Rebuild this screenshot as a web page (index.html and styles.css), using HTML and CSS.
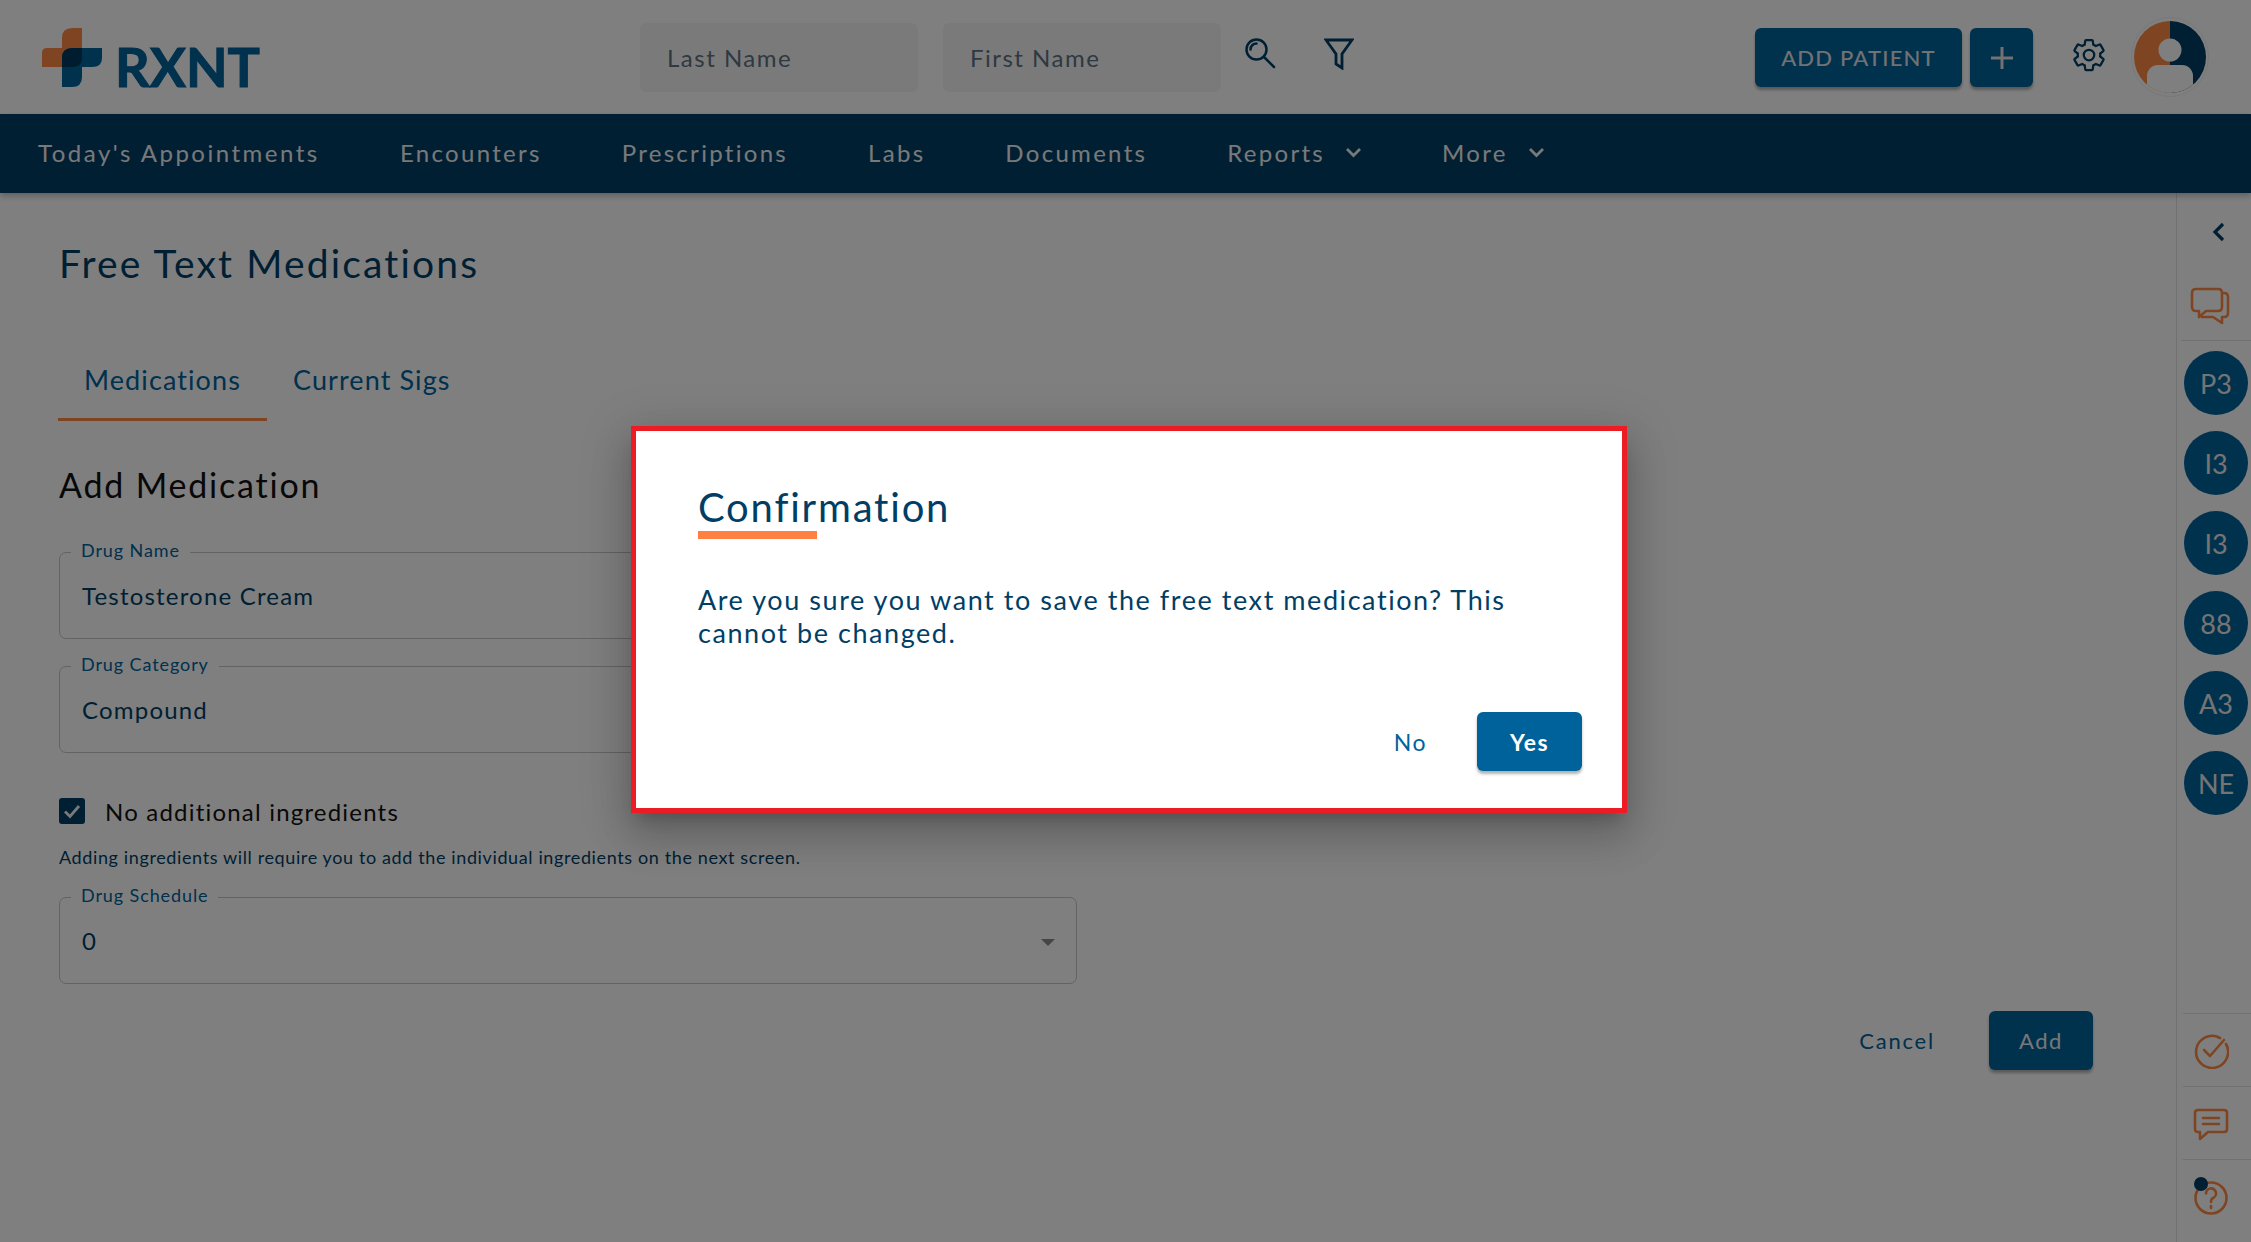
FILE: index.html
```html
<!DOCTYPE html>
<html lang="en">
<head>
<meta charset="utf-8">
<title>Free Text Medications</title>
<link rel="stylesheet" href="styles.css">
</head>
<body>
<div class="app">
  <header class="top">
    <div class="logo">
      <svg class="logo-mark" width="60" height="59" viewBox="0 0 60 59">
        <path class="lg-o" d="M40 0V39H0V25Q0 20 5 20H20V10Q20 0 30 0Z"/>
        <path class="lg-b" d="M20 30Q20 20 30 20H60V30Q60 39 50 39H40V49Q40 59 30 59H20Z"/>
        <path class="lg-d" d="M20 39V30Q20 20 30 20H40V30Q40 39 30 39Z"/>
      </svg>
      <span class="logo-text">RXNT</span>
    </div>
    <div class="search-box">Last Name</div>
    <div class="search-box second">First Name</div>
    <svg class="ic-search" width="32" height="32" viewBox="0 0 32 32"><circle cx="12.500" cy="12.500" r="10"/><path d="M20 20L30 30M6.500 12.500A6 6 0 0 1 12.500 6.500"/></svg>
    <svg class="ic-filter" width="30" height="32" viewBox="0 0 30 32"><path d="M2 2H28L18 16V30L12 26V16Z"/></svg>
    <button class="btn-add">ADD PATIENT</button>
    <button class="btn-plus"><svg width="24" height="24" viewBox="0 0 24 24"><path d="M12 1V23M1 12H23"/></svg></button>
    <svg class="ic-gear" width="36" height="36" viewBox="0 0 24 24"><path d="M19.430 12.980c.04-.32.07-.64.07-.98s-.03-.66-.07-.98l2.110-1.650c.19-.15.24-.42.12-.64l-2-3.460c-.12-.22-.39-.3-.61-.22l-2.490 1c-.52-.4-1.080-.73-1.690-.98l-.38-2.650C14.460 2.180 14.250 2 14 2h-4c-.25 0-.46.18-.49.42l-.38 2.650c-.61.25-1.170.59-1.690.98l-2.490-1c-.23-.09-.49 0-.61.22l-2 3.460c-.13.22-.07.49.12.64l2.110 1.650c-.04.32-.07.65-.07.98s.03.66.07.98l-2.110 1.650c-.19.15-.24.42-.12.64l2 3.460c.12.22.39.3.61.22l2.490-1c.52.4 1.080.73 1.690.98l.38 2.650c.03.24.24.42.49.42h4c.25 0 .46-.18.49-.42l.38-2.650c.61-.25 1.170-.59 1.690-.98l2.490 1c.23.09.49 0 .61-.22l2-3.460c.12-.22.07-.49-.12-.64l-2.110-1.650zM12 15.500c-1.930 0-3.500-1.570-3.500-3.500s1.570-3.500 3.500-3.500 3.500 1.570 3.500 3.500-1.570 3.500-3.500 3.500z"/></svg>
    <svg class="avatar" width="78" height="80" viewBox="0 0 78 80">
      <defs><clipPath id="av"><circle cx="39" cy="40" r="36"/></clipPath></defs>
      <ellipse cx="39" cy="40" rx="38.500" ry="39.500" class="av-ring"/>
      <g clip-path="url(#av)">
        <rect x="0" y="0" width="39" height="80" class="av-o"/>
        <rect x="39" y="0" width="39" height="80" class="av-d"/>
        <circle cx="39" cy="33" r="11.500" class="av-w"/>
        <rect x="16" y="48" width="46" height="40" rx="11" class="av-w"/>
      </g>
    </svg>
  </header>

  <nav class="nav">
    <a class="nav-item">Today's Appointments</a>
    <a class="nav-item">Encounters</a>
    <a class="nav-item">Prescriptions</a>
    <a class="nav-item">Labs</a>
    <a class="nav-item">Documents</a>
    <a class="nav-item">Reports<svg class="chev" width="17" height="11" viewBox="0 0 17 11"><path d="M2 2L8.500 8.500L15 2"/></svg></a>
    <a class="nav-item">More<svg class="chev" width="17" height="11" viewBox="0 0 17 11"><path d="M2 2L8.500 8.500L15 2"/></svg></a>
  </nav>

  <div class="content">
    <main class="main">
      <h1 class="page-title">Free Text Medications</h1>
      <div class="tabs">
        <span class="tab active">Medications</span>
        <span class="tab">Current Sigs</span>
      </div>
      <h2 class="section-title">Add Medication</h2>
      <div class="field"><span class="field-label">Drug Name</span><span class="field-value">Testosterone Cream</span></div>
      <div class="field field-next"><span class="field-label">Drug Category</span><span class="field-value">Compound</span></div>
      <div class="check-row">
        <span class="checkbox"><svg width="20" height="20" viewBox="0 0 20 20"><path d="M3 10.500L8 15.500L17 5"/></svg></span>
        <span class="check-label">No additional ingredients</span>
      </div>
      <p class="helper">Adding ingredients will require you to add the individual ingredients on the next screen.</p>
      <div class="field field-select"><span class="field-label">Drug Schedule</span><span class="field-value">0</span><span class="caret"></span></div>
      <div class="actions">
        <span class="btn-text">Cancel</span>
        <button class="btn-primary">Add</button>
      </div>
    </main>

    <aside class="side">
      <div class="side-head">
        <svg class="side-chev" width="14" height="20" viewBox="0 0 14 20"><path d="M11 2L3 10L11 18"/></svg>
        <svg class="side-chat" width="40" height="38" viewBox="0 0 40 38"><path d="M6 2H28Q32 2 32 6V20Q32 24 28 24H16L9 30V24H6Q2 24 2 20V6Q2 2 6 2Z"/><path d="M32 6H34Q38 6 38 10V26Q38 30 34 30H32V36L23 30H11"/></svg>
      </div>
      <div class="side-list">
        <span class="bubble">P3</span>
        <span class="bubble">I3</span>
        <span class="bubble">I3</span>
        <span class="bubble">88</span>
        <span class="bubble">A3</span>
        <span class="bubble">NE</span>
      </div>
      <div class="side-foot">
        <div class="foot-item"><svg width="36" height="36" viewBox="0 0 36 36"><path d="M33 11A16 16 0 1 1 27 5"/><path d="M11 17L17 23L31 7"/></svg></div>
        <div class="foot-item"><svg width="36" height="36" viewBox="0 0 36 36"><path d="M5 4H31Q34 4 34 7V23Q34 26 31 26H15L7 33V26H5Q2 26 2 23V7Q2 4 5 4Z"/><path d="M10 12H26M10 18H26"/></svg></div>
        <div class="foot-item help"><svg width="36" height="36" viewBox="0 0 36 36"><circle cx="18" cy="18" r="15.500"/><path d="M13 13.500A5 5 0 1 1 20 18Q18 19 18 22M18 26V28"/></svg><span class="dot"></span></div>
      </div>
    </aside>
  </div>

  <div class="scrim"></div>
  <section class="modal">
    <h3 class="modal-title">Confirmation</h3>
    <p class="modal-body">Are you sure you want to save the free text medication? This cannot be changed.</p>
    <div class="modal-actions">
      <span class="btn-no">No</span>
      <button class="btn-yes">Yes</button>
    </div>
  </section>
</div>
</body>
</html>
```
FILE: styles.css
```css
* { box-sizing: border-box; }
html, body { margin: 0; padding: 0; background: #fff; }
body { font-family: "Lato", "Noto Sans", sans-serif; color: #003e66; overflow: hidden; }
button { font-family: inherit; border: 0; cursor: pointer; }

.app { position: relative; width: 2251px; height: 1242px; display: flex; flex-direction: column; overflow: hidden; }

/* top bar */
.top { height: 114px; flex: none; display: flex; align-items: center; padding-left: 42px; background: #fff; }
.logo { width: 218px; display: flex; align-items: flex-end; gap: 13px; height: 59px; margin-top: 1px; flex: none; }
.logo-mark { flex: none; }
.lg-o { fill: #ff8a44; }
.lg-b { fill: #00629b; }
.lg-d { fill: #003a61; }
.logo-text { font-weight: 700; font-size: 54px; line-height: 40px; height: 40px; color: #00629b; letter-spacing: 0; -webkit-text-stroke: 1px #00629b; }
.search-box { width: 278px; height: 69px; margin-left: 380px; background: #f5f5f5; border-radius: 6px; display: flex; align-items: center; padding-left: 27px; font-size: 24px; letter-spacing: 1.500px; color: #5d7283; flex: none; }
.search-box.second { margin-left: 25px; }
.ic-search { margin-left: 23px; flex: none; margin-top: -9px; fill: none; stroke: #003e66; stroke-width: 2.500; stroke-linecap: round; }
.ic-filter { margin-left: 48px; flex: none; margin-top: -7px; fill: none; stroke: #003e66; stroke-width: 2.800; stroke-linejoin: miter; }
.btn-add { margin-left: 401px; width: 207px; height: 59px; padding-bottom: 2px; background: #00629b; color: #e4e4e4; border-radius: 6px; font-size: 22px; font-weight: 500; letter-spacing: 1.200px; box-shadow: 0 3px 3px rgba(0,0,0,.3); flex: none; margin-top: 1px; }
.btn-plus { margin-left: 8px; width: 63px; height: 59px; background: #00629b; border-radius: 6px; box-shadow: 0 3px 3px rgba(0,0,0,.3); display: flex; align-items: center; justify-content: center; padding: 0; flex: none; margin-top: 1px; }
.btn-plus svg { fill: none; stroke: #e4e4e4; stroke-width: 3; }
.ic-gear { margin-left: 38px; flex: none; fill: none; stroke: #003e66; stroke-width: 1.500; margin-top: -5px; }
.avatar { margin-left: 24px; flex: none; margin-top: -1px; }
.av-ring { fill: #fff; stroke: #f0f0f0; stroke-width: 1; }
.av-o { fill: #ff8a44; }
.av-d { fill: #003e66; }
.av-w { fill: #fff; }

/* nav */
.nav { height: 79px; flex: none; background: #003e66; display: flex; align-items: center; padding: 0 0 2px 38px; gap: 80px; box-shadow: 0 3px 6px rgba(0,0,0,.25); position: relative; }
.nav-item { display: flex; align-items: center; color: #f2f2f2; font-size: 24px; letter-spacing: 2.300px; }
.nav-item:first-child { min-width: 282px; letter-spacing: 2.500px; }
.chev { margin-left: 20px; fill: none; stroke: #f2f2f2; stroke-width: 2.800; }

/* content */
.content { flex: 1; display: flex; min-height: 0; }
.main { flex: 1; min-width: 0; padding: 46px 83px 0 59px; }
.page-title { margin: 0; font-weight: 400; font-size: 39px; line-height: 48px; letter-spacing: 2.150px; color: #003e66; }
.tabs { display: flex; margin: 50px 0 0 -1px; }
.tab { font-size: 27px; line-height: 86px; height: 84px; padding: 0 26px; letter-spacing: 1.100px; color: #00629b; border-bottom: 3px solid transparent; }
.tab.active { border-bottom-color: #ff8a44; }
.section-title { margin: 40px 0 0; font-weight: 400; font-size: 34px; line-height: 48px; letter-spacing: 1.800px; color: #111; }
.field { position: relative; width: 1018px; height: 87px; margin-top: 43px; border: 1px solid #c6c6c6; border-radius: 7px; display: flex; align-items: center; padding-left: 22px; }
.field-next { margin-top: 27px; }
.field-select { margin-top: 29px; }
.field-label { position: absolute; left: 11px; top: -15px; padding: 0 10px; line-height: 24px; background: #fff; font-size: 18px; letter-spacing: .9px; color: #00629b; }
.field-value { font-size: 24px; letter-spacing: 1.200px; color: #003e66; }
.caret { position: absolute; right: 21px; top: 41px; border-left: 7px solid transparent; border-right: 7px solid transparent; border-top: 7px solid #8a8a8a; }
.check-row { display: flex; align-items: center; gap: 20px; margin-top: 45px; height: 26px; }
.checkbox { width: 26px; height: 26px; flex: none; background: #003e66; border-radius: 3px; display: flex; align-items: center; justify-content: center; }
.checkbox svg { fill: none; stroke: #f2f2f2; stroke-width: 2.800; }
.check-label { font-size: 24px; letter-spacing: 1.200px; color: #111; }
.helper { margin: 22px 0 0; font-size: 18px; line-height: 22px; letter-spacing: .62px; color: #003e66; }
.actions { display: flex; justify-content: flex-end; align-items: center; gap: 54px; margin-top: 27px; }
.btn-text { font-size: 22px; letter-spacing: 1.800px; color: #00629b; }
.btn-primary { width: 104px; height: 59px; background: #00629b; color: #f0f0f0; font-size: 22px; letter-spacing: 1.500px; border-radius: 6px; box-shadow: 0 3px 3px rgba(0,0,0,.3); }

/* sidebar */
.side { width: 75px; flex: none; border-left: 1px solid #e2e2e2; display: flex; flex-direction: column; }
.side-head { height: 148px; margin: 0 0 0 4px; border-bottom: 1px solid #e2e2e2; display: flex; flex-direction: column; }
.side-chev { margin: 29px 0 0 31px; fill: none; stroke: #003e66; stroke-width: 3.200; flex: none; }
.side-chat { margin: 45px 0 0 9px; fill: none; stroke: #ff8a44; stroke-width: 2.600; stroke-linejoin: round; flex: none; }
.side-list { display: flex; flex-direction: column; gap: 16px; padding: 10px 0 0 7px; }
.bubble { width: 64px; height: 64px; border-radius: 50%; background: #00629b; color: #e8e8e8; display: flex; align-items: center; justify-content: center; font-size: 27px; }
.side-foot { margin-top: auto; margin-left: 6px; }
.foot-item { height: 74px; border-top: 1px solid #e2e2e2; display: flex; align-items: center; justify-content: center; position: relative; padding-right: 12px; margin-bottom: -1px; }
.foot-item svg { fill: none; stroke: #ff8a44; stroke-width: 2.600; stroke-linecap: round; stroke-linejoin: round; }
.foot-item.help { height: 84px; align-items: flex-start; padding-top: 20px; }
.dot { position: absolute; left: 11px; top: 17px; width: 14px; height: 14px; border-radius: 50%; background: #003e66; }

/* modal */
.scrim { position: absolute; inset: 0; background: rgba(0,0,0,.5); }
.modal { position: absolute; left: 631px; top: 426px; width: 996px; height: 387px; background: #fff; border: 5px solid #ed1c24; padding: 52px 40px 0 62px; display: flex; flex-direction: column; box-shadow: 0 11px 15px -7px rgba(0,0,0,.2), 0 24px 38px 3px rgba(0,0,0,.14), 0 9px 46px 8px rgba(0,0,0,.12); }
.modal-title { position: relative; margin: 0; font-weight: 400; font-size: 40px; line-height: 48px; letter-spacing: 1.800px; color: #003e66; padding-bottom: 3px; }
.modal-title::after { content: ""; display: block; width: 119px; height: 8px; margin-top: 0; background: #ff8040; }
.modal-body { margin: 41px 0 0; font-size: 27px; line-height: 33px; letter-spacing: 1.560px; color: #003e66; width: 860px; }
.modal-actions { margin-top: auto; margin-bottom: 37px; display: flex; justify-content: flex-end; align-items: center; gap: 50px; }
.btn-no { font-size: 23px; letter-spacing: 1.500px; color: #00629b; }
.btn-yes { width: 105px; height: 59px; background: #00629b; color: #fff; font-size: 23px; font-weight: 700; letter-spacing: 1.500px; border-radius: 6px; box-shadow: 0 3px 3px rgba(0,0,0,.3); }
```
